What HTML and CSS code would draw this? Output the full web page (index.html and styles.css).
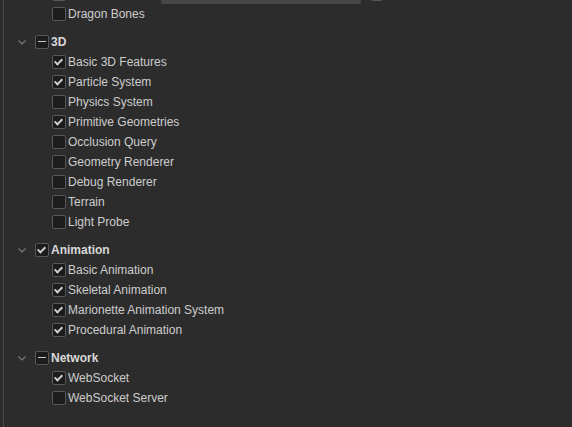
FILE: index.html
```html
<!DOCTYPE html>
<html>
<head>
<meta charset="utf-8">
<link rel="stylesheet" href="styles.css">
</head>
<body>
<div class="panel">
  <div class="list">
    <div class="row child">
      <span class="cb"></span>
      <span class="label"></span>
      <span class="field"></span>
      <span class="mini"></span>
    </div>
    <div class="row child"><span class="cb"></span><span class="label">Dragon Bones</span></div>

    <div class="group">
      <div class="row head">
        <svg class="chev" width="8" height="5" viewBox="0 0 8 5"><polyline points="0.5,0.5 4,4 7.5,0.5" fill="none" stroke="#7a7a7a" stroke-width="1.2"/></svg>
        <span class="cb mixed"></span><span class="label">3D</span>
      </div>
      <div class="row child"><span class="cb on"></span><span class="label">Basic 3D Features</span></div>
      <div class="row child"><span class="cb on"></span><span class="label">Particle System</span></div>
      <div class="row child"><span class="cb"></span><span class="label">Physics System</span></div>
      <div class="row child"><span class="cb on"></span><span class="label">Primitive Geometries</span></div>
      <div class="row child"><span class="cb"></span><span class="label">Occlusion Query</span></div>
      <div class="row child"><span class="cb"></span><span class="label">Geometry Renderer</span></div>
      <div class="row child"><span class="cb"></span><span class="label">Debug Renderer</span></div>
      <div class="row child"><span class="cb"></span><span class="label">Terrain</span></div>
      <div class="row child"><span class="cb"></span><span class="label">Light Probe</span></div>
    </div>

    <div class="group">
      <div class="row head">
        <svg class="chev" width="8" height="5" viewBox="0 0 8 5"><polyline points="0.5,0.5 4,4 7.5,0.5" fill="none" stroke="#7a7a7a" stroke-width="1.2"/></svg>
        <span class="cb on"></span><span class="label">Animation</span>
      </div>
      <div class="row child"><span class="cb on"></span><span class="label">Basic Animation</span></div>
      <div class="row child"><span class="cb on"></span><span class="label">Skeletal Animation</span></div>
      <div class="row child"><span class="cb on"></span><span class="label">Marionette Animation System</span></div>
      <div class="row child"><span class="cb on"></span><span class="label">Procedural Animation</span></div>
    </div>

    <div class="group">
      <div class="row head">
        <svg class="chev" width="8" height="5" viewBox="0 0 8 5"><polyline points="0.5,0.5 4,4 7.5,0.5" fill="none" stroke="#7a7a7a" stroke-width="1.2"/></svg>
        <span class="cb mixed"></span><span class="label">Network</span>
      </div>
      <div class="row child"><span class="cb on"></span><span class="label">WebSocket</span></div>
      <div class="row child"><span class="cb"></span><span class="label">WebSocket Server</span></div>
    </div>
  </div>
</div>
</body>
</html>
```
FILE: styles.css
```css
html, body {
  margin: 0;
  padding: 0;
  height: 100%;
  background: #2c2c2c;
  overflow: hidden;
}
body {
  font-family: "Liberation Sans", Arial, sans-serif;
  font-size: 12px;
  color: #cccccc;
}
.panel {
  display: flow-root;
  margin-left: 3px;
  height: 100%;
  border-left: 1px solid #4a4a4a;
}
.list {
  margin-top: -16px;
}
.group {
  margin-top: 8px;
}
.row {
  height: 20px;
  display: flex;
  align-items: center;
  white-space: nowrap;
}
.row.child {
  padding-left: 48px;
}
.row.head {
  padding-left: 14px;
}
.chev {
  display: block;
  margin-right: 9px;
}
.head .label {
  font-weight: bold;
  color: #d8d8d8;
}
.cb {
  box-sizing: border-box;
  width: 14px;
  height: 14px;
  border: 1px solid #575757;
  border-radius: 2px;
  background: #1c1c1c;
  margin-right: 2px;
  position: relative;
  flex: none;
}
.cb.on::after {
  content: "";
  position: absolute;
  left: 3px;
  top: 1px;
  width: 3px;
  height: 6px;
  border-right: 2px solid #d0d0d0;
  border-bottom: 2px solid #d0d0d0;
  transform: rotate(45deg);
  transform-origin: center;
}
.cb.mixed::after {
  content: "";
  position: absolute;
  left: 2px;
  right: 2px;
  top: 5px;
  height: 1px;
  background: #c8c8c8;
}
.label {
  line-height: 20px;
}
.field {
  display: block;
  width: 200px;
  height: 20px;
  background: #474747;
  border-radius: 2px;
  margin-left: 93px;
}
.mini {
  display: block;
  width: 13px;
  height: 14px;
  background: #555;
  border-radius: 3px;
  margin-left: 9px;
}
```
